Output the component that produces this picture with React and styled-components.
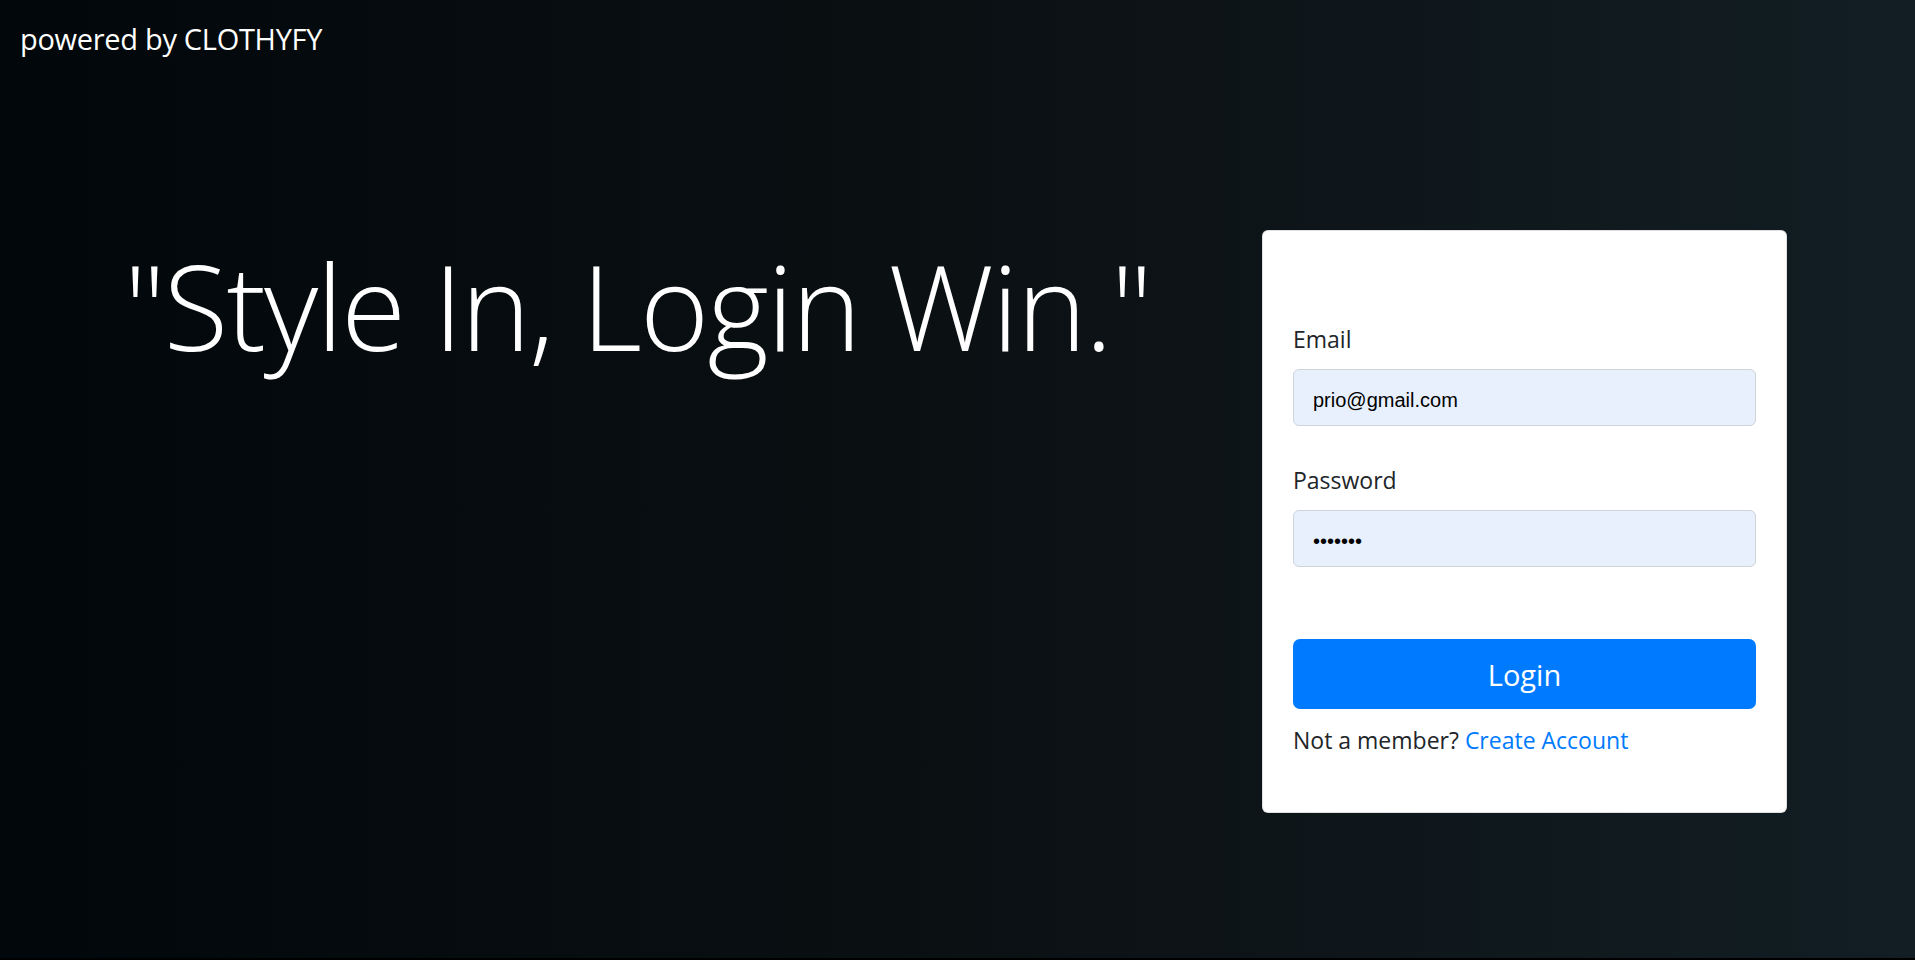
import React from 'react'
import styled, {createGlobalStyle} from 'styled-components'

const GlobalStyle = createGlobalStyle`
  html, body {
    margin: 0;
    padding: 0;
    background: #000;
  }
  body {
    font-family: "Open Sans", "Noto Sans", sans-serif;
    color: #212529;
  }
  * {
    box-sizing: border-box;
  }
`

const Page = styled.div`
  min-height: 958px;
  background: linear-gradient(90deg, #01070a 0%, #0b1013 50%, #121e24 100%);
  display: flex;
  flex-direction: column;
`

const TopBar = styled.div`
  padding: 16px 20px 0;
  color: #fff;
  font-size: 29px;
  line-height: 45px;
  letter-spacing: -0.3px;
`

const Row = styled.div`
  display: flex;
  align-items: flex-start;
  margin-top: 169px;
  padding: 0 128px 0 124px;
`

const Slogan = styled.div`
  flex: 1;
  margin-top: 5px;
`

const Quote = styled.h1`
  margin: 0;
  color: #fff;
  font-weight: 300;
  font-size: 118px;
  line-height: 1.2;
  letter-spacing: -1.8px;
  white-space: nowrap;
`

const Card = styled.div`
  width: 525px;
  background: #fff;
  border: 1.5px solid rgba(0, 0, 0, 0.125);
  border-radius: 6px;
  padding: 90px 30px 54px;
`

const Group = styled.div`
  margin-bottom: ${(props) => props.last ? '72px' : '36px'};
`

const Label = styled.label`
  display: block;
  font-size: 23px;
  line-height: 36px;
  margin-bottom: 12px;
  color: #212529;
`

const Input = styled.input`
  display: block;
  width: 100%;
  height: 57px;
  padding: 5px 19px 0;
  font-family: "Liberation Sans", Arial, sans-serif;
  font-size: 20px;
  color: #000;
  background: #e8f0fe;
  border: 1.5px solid #ced4da;
  border-radius: 6px;
  outline: none;
`

const Button = styled.button`
  display: block;
  width: 100%;
  height: 70px;
  border: none;
  border-radius: 7px;
  background: #007bff;
  color: #fff;
  font-family: "Open Sans", "Noto Sans", sans-serif;
  font-size: 29px;
  cursor: pointer;
`

const Footer = styled.p`
  margin: 13px 0 0;
  font-size: 23px;
  line-height: 36px;
  color: #212529;
`

const Link = styled.a`
  color: #007bff;
  text-decoration: none;
`

export default function App() {
    return (
        <Page>
            <GlobalStyle/>
            <TopBar>powered by CLOTHYFY</TopBar>
            <Row>
                <Slogan>
                    <Quote>"Style In, Login Win."</Quote>
                </Slogan>
                <Card>
                    <form onSubmit={(e) => e.preventDefault()}>
                        <Group>
                            <Label htmlFor="email">Email</Label>
                            <Input id="email" type="email" defaultValue="prio@gmail.com"/>
                        </Group>
                        <Group last>
                            <Label htmlFor="password">Password</Label>
                            <Input id="password" type="password" defaultValue="1234567"/>
                        </Group>
                        <Button type="submit">Login</Button>
                        <Footer>
                            Not a member? <Link href="#">Create Account</Link>
                        </Footer>
                    </form>
                </Card>
            </Row>
        </Page>
    )
}
